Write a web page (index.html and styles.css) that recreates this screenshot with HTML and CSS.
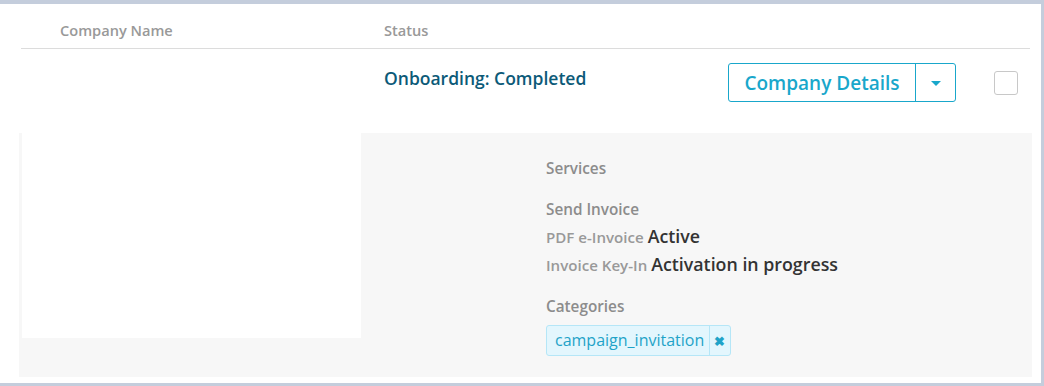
FILE: index.html
```html
<!DOCTYPE html>
<html>
<head>
<meta charset="utf-8">
<title>Companies</title>
<link rel="stylesheet" href="styles.css">
</head>
<body>
<div class="panel">
	<div class="table-head">
		<div class="col-name">Company Name</div>
		<div class="col-status">Status</div>
	</div>
	<div class="row">
		<div class="col-name"></div>
		<div class="col-status status-text">Onboarding: Completed</div>
		<div class="actions">
			<div class="btn-group">
				<div class="btn-main">Company Details</div>
				<div class="btn-caret"><span class="caret"></span></div>
			</div>
			<span class="check"></span>
		</div>
	</div>
	<div class="details">
		<div class="logo-box"></div>
		<div class="info">
			<h4 class="info-title">Services</h4>
			<div class="service-name">Send Invoice</div>
			<div class="service"><span class="label">PDF e-Invoice</span> <span class="value">Active</span></div>
			<div class="service"><span class="label">Invoice Key-In</span> <span class="value">Activation in progress</span></div>
			<h4 class="info-title cat-title">Categories</h4>
			<span class="tag"><span class="tag-text">campaign_invitation</span><span class="tag-close">&#10006;</span></span>
		</div>
	</div>
</div>
</body>
</html>
```

FILE: styles.css
```css
*{
	margin: 0px;
	padding: 0px;
	box-sizing: border-box;
}
body{
	background: #c4cddc;
	font-family: "Open Sans", "Noto Sans", sans-serif;
	padding-top: 4px;
}
.panel{
	width: 1041px;
	height: 379px;
	background: #fff;
	padding: 0 9px 0 19px;
}
.table-head{
	display: flex;
	height: 45px;
	margin: 0 2px;
	border-bottom: 1px solid #dcdcdc;
	align-items: center;
	padding-top: 7px;
	font-size: 14.6px;
	font-weight: 600;
	color: #999;
}
.col-name{
	width: 363px;
	padding-left: 39px;
}
.col-status{
	width: 344px;
}
.row{
	display: flex;
	height: 84px;
	padding: 14px 0 0 2px;
}
.status-text{
	font-size: 17.5px;
	font-weight: 600;
	color: #0c5a78;
	padding-top: 3px;
}
.actions{
	display: flex;
	align-items: flex-start;
}
.btn-group{
	display: flex;
	height: 39px;
	border: 1px solid #19a7cb;
	border-radius: 3px;
	color: #19a7cb;
	background: #fff;
}
.btn-main{
	width: 187px;
	font-size: 19px;
	font-weight: 600;
	line-height: 38px;
	text-align: center;
	border-right: 1px solid #19a7cb;
}
.btn-caret{
	width: 39px;
	display: flex;
	align-items: center;
	justify-content: center;
}
.caret{
	border-left: 5px solid transparent;
	border-right: 5px solid transparent;
	border-top: 5px solid #19a7cb;
	margin-top: 1px;
}
.check{
	width: 24px;
	height: 24px;
	margin: 8px 0 0 38px;
	border: 1px solid #c8c8c8;
	border-radius: 3px;
}
.details{
	display: flex;
	height: 244px;
	background: #f7f7f7;
}
.logo-box{
	width: 339px;
	height: 205px;
	margin-left: 3px;
	background: #fff;
}
.info{
	padding: 25px 0 0 185px;
	color: #8c8c8c;
	font-weight: 600;
}
.info-title{
	font-size: 15.3px;
	font-weight: 600;
	margin-bottom: 22px;
}
.service-name{
	font-size: 15.3px;
	line-height: 28px;
	margin: -5px 0 -1px;
}
.service{
	height: 28px;
	line-height: 28px;
	font-size: 15.3px;
}
.service span{
	line-height: 28px;
}
.service .label{
	font-weight: 600;
	font-size: 15.1px;
	color: #999;
}
.value{
	font-size: 17.8px;
	color: #333;
	font-weight: 600;
}
.cat-title{
	margin: 18px 0 9px;
}
.tag{
	display: inline-flex;
	height: 31px;
	align-items: center;
	background: #e3f6fd;
	border: 1px solid #b5e6f7;
	border-radius: 3px;
	color: #1fa3c8;
}
.tag-text{
	padding: 0 5px 0 8px;
	font-size: 16px;
	font-weight: 400;
	line-height: 29px;
	border-right: 1px solid #b5e6f7;
}
.tag-close{
	padding: 0 5px 0 4px;
	font-size: 13px;
	font-weight: 700;
}
```
